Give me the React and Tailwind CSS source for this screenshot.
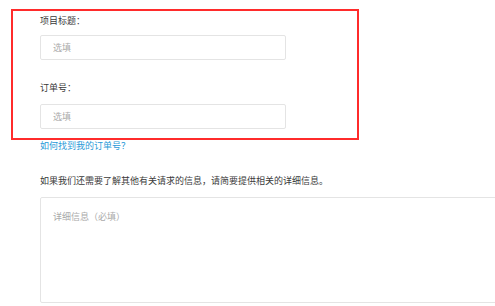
export default function App() {
  return (
    <div
      className="w-[495px] h-[306px] overflow-hidden bg-white text-[9px] leading-[12px] text-[#3a3a3a]"
      style={{ fontFamily: '"Noto Sans CJK SC", "Noto Sans", sans-serif' }}
    >
      <div className="pt-[9px] pl-[11px]">
        {/* Highlighted fields */}
        <div className="w-[348px] border-2 border-[#ff2b2b] pl-[27px] pt-[4px] pb-[9px]">
          <label className="block">项目标题：</label>
          <input
            type="text"
            placeholder="选填"
            className="block mt-[8px] w-[246px] h-[25px] border border-[#e4e4e4] rounded-[2px] pl-[12px] outline-none placeholder:text-[#aaa]"
          />
          <label className="block mt-[22px]">订单号：</label>
          <input
            type="text"
            placeholder="选填"
            className="block mt-[10px] w-[246px] h-[25px] border border-[#e4e4e4] rounded-[2px] pl-[12px] outline-none placeholder:text-[#aaa]"
          />
        </div>
      </div>

      <div className="pl-[40px]">
        <a className="block text-[#2a9ad8]">如何找到我的订单号？</a>
        <p className="mt-[23px]">如果我们还需要了解其他有关请求的信息，请简要提供相关的详细信息。</p>
        <textarea
          placeholder="详细信息（必填）"
          className="block mt-[10px] w-[480px] h-[106px] border border-[#e4e4e4] rounded-[2px] pl-[12px] pt-[13px] resize-none outline-none placeholder:text-[#aaa]"
        />
      </div>
    </div>
  )
}
